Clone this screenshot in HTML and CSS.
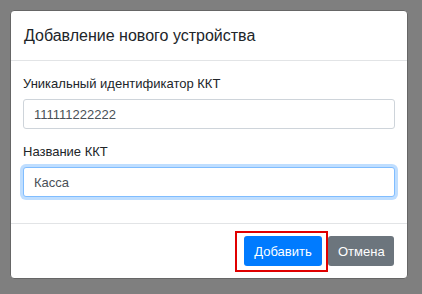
FILE: index.html
```html
<!DOCTYPE html>
<html lang="ru">
<head>
  <meta charset="UTF-8" />
  <title>Добавление нового устройства</title>
  <meta name="viewport" content="width=device-width, initial-scale=1" />
  <link rel="stylesheet" href="styles.css">
</head>
<body>
  <div class="modal">
    <div class="modal-header">
      <h5 class="modal-title">Добавление нового устройства</h5>
    </div>
    <form class="modal-body" id="deviceForm">
      <div class="form-group">
        <label for="kktId">Уникальный идентификатор ККТ</label>
        <input type="text" id="kktId" class="form-control" value="111111222222" />
      </div>
      <div class="form-group">
        <label for="kktName">Название ККТ</label>
        <input type="text" id="kktName" class="form-control focus" value="Касса" />
      </div>
    </form>
    <div class="modal-footer">
      <span class="highlight"><button type="submit" form="deviceForm" class="btn btn-primary">Добавить</button></span>
      <button type="button" class="btn btn-secondary">Отмена</button>
    </div>
  </div>
</body>
</html>
```

FILE: styles.css
```css
body { font-family: "Liberation Sans", Arial, sans-serif; background: #7f7f7f; margin: 0; padding: 10px; color: #212529; }
.modal { width: 396px; background: #fff; border: 1px solid #666; border-radius: 4px; }
.modal-header { padding: 12px 13px; border-bottom: 1px solid #e2e4e6; }
.modal-title { margin: 0; font-size: 16px; font-weight: normal; line-height: 25px; }
.modal-body { display: block; padding: 13px 12px 13px 12px; margin: 0; }
.form-group { margin-bottom: 13px; }
label { display: block; font-size: 13px; line-height: 19px; margin-bottom: 6px; }
.form-control { display: block; box-sizing: border-box; width: 100%; height: 30px; padding: 0 10px; font-family: inherit; font-size: 13px; color: #495057; border: 1px solid #ced4da; border-radius: 3px; outline: none; }
.form-control.focus { border-color: #80bdff; box-shadow: 0 0 0 3px rgba(0, 123, 255, .25); }
.modal-footer { display: flex; justify-content: flex-end; align-items: center; padding: 9px 10px; border-top: 1px solid #e2e4e6; }
.btn { height: 30px; margin: 3px; padding: 0 10px; font-family: inherit; font-size: 13px; color: #fff; border: none; border-radius: 3px; cursor: pointer; }
.btn-primary { background: #007bff; width: 78px; }
.btn-secondary { background: #6c757d; width: 66px; }
.highlight { position: relative; display: inline-flex; }
.highlight::after { content: ""; position: absolute; left: -6px; top: -2px; right: -3px; bottom: -3px; border: 2px solid #e00000; pointer-events: none; }
```
